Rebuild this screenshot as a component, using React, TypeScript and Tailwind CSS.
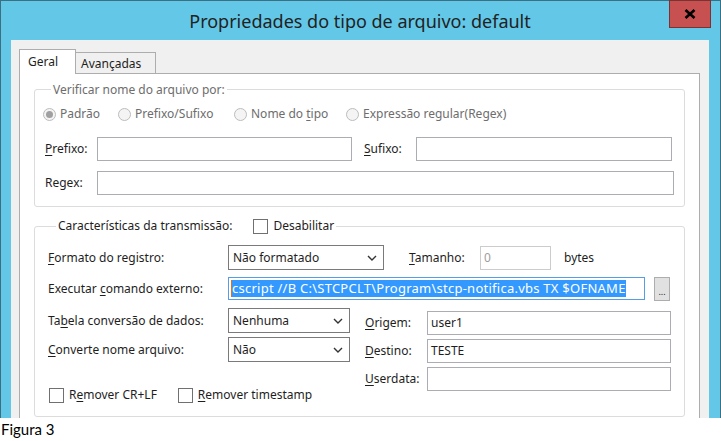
import React from 'react';

const ui = { fontFamily: '"Noto Sans", "Open Sans", sans-serif' };

function K({ children }: { children: React.ReactNode }) {
  // access key underline
  return <span className="underline underline-offset-[2px] decoration-[1px]">{children}</span>;
}

function Radio({ checked, children, w }: { checked?: boolean; children: React.ReactNode; w: string }) {
  return (
    <div className={`flex items-center gap-[4px] ${w}`}>
      <span className="w-[13px] h-[13px] rounded-full border border-[#bcbcbc] bg-[#f4f4f4] flex items-center justify-center">
        {checked && <span className="w-[7px] h-[7px] rounded-full bg-[#a0a0a0]" />}
      </span>
      <span className="text-[#6d6d6d]">{children}</span>
    </div>
  );
}

function Check({ children }: { children: React.ReactNode }) {
  return (
    <div className="flex items-center gap-[5px]">
      <span className="w-[15px] h-[15px] border border-[#707070] bg-white" />
      <span>{children}</span>
    </div>
  );
}

function Combo({ value, w }: { value: string; w: string }) {
  return (
    <div className={`${w} h-[25px] border border-[#7a7a7a] bg-white flex items-center pl-[4px] pr-[6px]`}>
      <span className="flex-1">{value}</span>
      <svg width="10" height="6" viewBox="0 0 10 6">
        <polyline points="1,1 5,5 9,1" fill="none" stroke="#333" strokeWidth="1.4" />
      </svg>
    </div>
  );
}

function TextBox({ value, w, disabled }: { value?: string; w: string; disabled?: boolean }) {
  return (
    <div
      className={`${w} h-[24px] border flex items-center pl-[3px] ${
        disabled ? 'border-[#cccccc] text-[#9d9d9d]' : 'border-[#abadb3]'
      } bg-white`}
    >
      {value}
    </div>
  );
}

export default function App() {
  return (
    <div className="w-[721px] h-[441px] bg-white overflow-hidden text-[12px] text-[#1e1e1e]" style={ui}>
      <div className="h-[418px] flex flex-col bg-[#63c8e7] border-l border-t border-r border-[#3d6f82] pl-[10px] pr-[11px]">
        {/* title bar */}
        <div className="h-[39px] relative flex items-center justify-center">
          <span className="text-[18px] text-[#222] pt-[1px]">Propriedades do tipo de arquivo: default</span>
          <div className="absolute top-[-1px] right-[-2px] w-[42px] h-[28px] bg-[#c75050] border border-[#7a3333] flex items-center justify-center">
            <svg width="12" height="10" viewBox="0 0 12 10">
              <path d="M1.5 1 L10.5 9 M10.5 1 L1.5 9" stroke="#000" strokeWidth="2.6" />
            </svg>
          </div>
        </div>

        {/* client area */}
        <div className="flex-1 bg-[#f0f0f0] pt-[9px] pl-[8px] pr-[9px] flex flex-col overflow-hidden">
          <div className="flex items-end h-[25px] -mb-px relative z-10">
            <div className="w-[57px] h-[25px] bg-white border border-b-0 border-[#adadad] pl-[8px] pt-[3px]">Geral</div>
            <div className="w-[80px] h-[22px] bg-[#f0f0f0] border border-l-0 border-[#adadad] pl-[5px] pt-[2px]">Avançadas</div>
          </div>
          <div className="flex-1 bg-white border border-b-0 border-[#adadad] pt-[8px] px-[14px]">
            {/* group 1 */}
            <fieldset className="border border-[#dcdcdc] rounded-[3px] pl-[8px] pr-[10px] pb-[11px]">
              <legend className="ml-[8px] px-[2px] h-[15px] leading-[15px] text-[#6d6d6d]">Verificar nome do arquivo por:</legend>
              <div className="flex items-center h-[16px] mt-[9px]">
                <Radio checked w="w-[75px]">Padrão</Radio>
                <Radio w="w-[116px]">Prefixo/Sufixo</Radio>
                <Radio w="w-[112px]">
                  Nome do <K>t</K>ipo
                </Radio>
                <Radio w="w-[180px]">Expressão regular(Regex)</Radio>
              </div>
              <div className="flex items-center mt-[15px] pl-[2px]">
                <span className="w-[52px]">
                  <K>P</K>refixo:
                </span>
                <TextBox w="w-[255px]" />
                <span className="w-[52px] ml-[12px]">
                  <K>S</K>ufixo:
                </span>
                <TextBox w="w-[256px]" />
              </div>
              <div className="flex items-center mt-[10px] pl-[2px]">
                <span className="w-[52px]">Regex:</span>
                <TextBox w="w-[577px]" />
              </div>
            </fieldset>

            {/* group 2 */}
            <fieldset className="mt-[11px] border border-[#dcdcdc] rounded-[3px] pl-[13px] pr-[10px] pb-[12px]">
              <legend className="ml-[8px] px-[2px] h-[16px] flex items-center">
                <span>Características da transmissão:</span>
                <span className="ml-[21px]">
                  <Check>Desabilitar</Check>
                </span>
              </legend>
              <div className="flex items-center h-[25px] mt-[11px]">
                <span className="w-[180px]">
                  <K>F</K>ormato do registro:
                </span>
                <Combo value="Não formatado" w="w-[156px]" />
                <span className="ml-[25px] w-[71px]">
                  <K>T</K>amanho:
                </span>
                <TextBox w="w-[71px]" value="0" disabled />
                <span className="ml-[13px]">bytes</span>
              </div>
              <div className="flex items-center h-[25px] mt-[6px]">
                <span className="w-[180px]">
                  Executar <K>c</K>omando externo:
                </span>
                <div className="w-[417px] h-[23px] border border-[#569de5] bg-white flex items-center pl-[2px]">
                  <span className="bg-[#3399ff] text-white text-[13px] leading-[17px] tracking-[0.25px] border-l border-[#e07020] whitespace-nowrap">
                    cscript //B C:\STCPCLT\Program\stcp-notifica.vbs TX $OFNAME
                  </span>
                </div>
                <div className="ml-[9px] w-[16px] h-[24px] bg-[#e1e1e1] border border-[#adadad] flex items-end justify-center pb-[4px] text-[9px] leading-[9px]">
                  ...
                </div>
              </div>
              <div className="flex">
                <div className="w-[302px] flex flex-col">
                  <div className="flex items-center mt-[7px]">
                    <span className="w-[180px]">
                      Ta<K>b</K>ela conversão de dados:
                    </span>
                    <Combo value="Nenhuma" w="w-[122px]" />
                  </div>
                  <div className="flex items-center mt-[4px]">
                    <span className="w-[180px]">
                      <K>C</K>onverte nome arquivo:
                    </span>
                    <Combo value="Não" w="w-[122px]" />
                  </div>
                  <div className="flex items-center gap-[21px] mt-[24px] pl-[1px]">
                    <Check>
                      R<K>e</K>mover CR+LF
                    </Check>
                    <Check>
                      <K>R</K>emover timestamp
                    </Check>
                  </div>
                </div>
                <div className="ml-[15px] flex flex-col">
                  <div className="flex items-center mt-[10px]">
                    <span className="w-[62px]">
                      <K>O</K>rigem:
                    </span>
                    <TextBox value="user1" w="w-[244px]" />
                  </div>
                  <div className="flex items-center mt-[4px]">
                    <span className="w-[62px]">
                      <K>D</K>estino:
                    </span>
                    <TextBox value="TESTE" w="w-[244px]" />
                  </div>
                  <div className="flex items-center mt-[4px]">
                    <span className="w-[62px]">
                      <K>U</K>serdata:
                    </span>
                    <TextBox w="w-[244px]" />
                  </div>
                </div>
              </div>
            </fieldset>
          </div>
        </div>
      </div>
      <div className="pl-[1px] pt-[2px] text-[15px] leading-[18px] text-black" style={{ fontFamily: 'Lato, "Open Sans", sans-serif' }}>
        Figura 3
      </div>
    </div>
  );
}
